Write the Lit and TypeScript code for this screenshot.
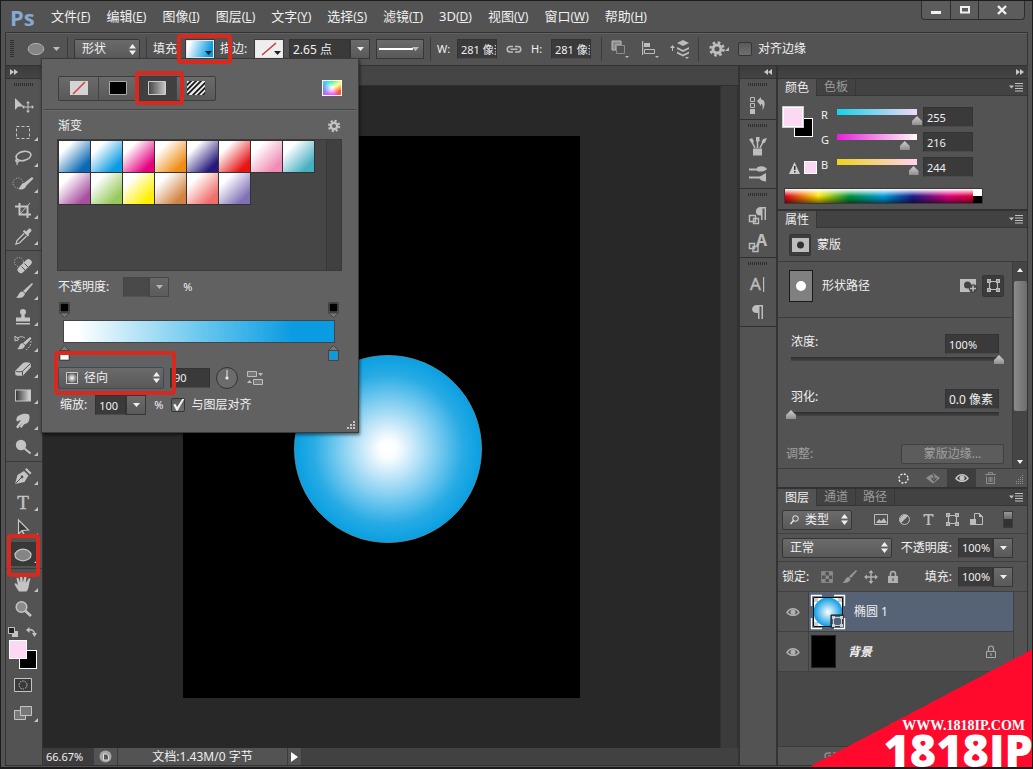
import { LitElement, html, svg, css, nothing, TemplateResult } from "lit";
import { customElement } from "lit/decorators.js";
import { classMap } from "lit/directives/class-map.js";
import { styleMap } from "lit/directives/style-map.js";

type Art = ReturnType<typeof svg>;

const icon = (w: number, h: number, art: Art, cls = "") =>
  html`<svg class=${cls} width=${w} height=${h} viewBox="0 0 ${w} ${h}" fill="currentColor" aria-hidden="true">${art}</svg>`;

const MENUS: [string, string][] = [
  ["文件", "F"], ["编辑", "E"], ["图像", "I"], ["图层", "L"], ["文字", "Y"], ["选择", "S"],
  ["滤镜", "T"], ["3D", "D"], ["视图", "V"], ["窗口", "W"], ["帮助", "H"],
];

const PRESETS = [
  "#0a68b4", "#0a9be2", "#e4007f", "#f08c14", "#27197c", "#e61414", "#f08cb4", "#46afc0",
  "#a850a0", "#96c85a", "#fff000", "#d28240", "#f06e6a", "#8070b4",
];

const SHIELD_DOTS = svg`<circle cx="6" cy="9" r="5" fill="none" stroke="currentColor" stroke-dasharray="1 1.6"/>`;

const TOOL_ART: Record<string, Art> = {
  move: svg`<path d="M3 2v12l3-3.2 5.500-.6z"/><path d="M16 6.500v9M11.500 11h9" stroke="currentColor" fill="none"/><path d="M16 5l-2 2.200h4zM16 17l-2-2.200h4zM10 11l2.200-2v4zM22 11l-2.200-2v4z"/>`,
  marquee: svg`<rect x="4.500" y="4.500" width="13" height="12" fill="none" stroke="currentColor" stroke-dasharray="3 2"/>`,
  lasso: svg`<ellipse cx="11.500" cy="8" rx="7.500" ry="4.500" transform="rotate(-12 11.500 8)" fill="none" stroke="currentColor" stroke-width="1.600"/><path d="M5 11c-2 1-1.500 3 .5 2.800s2-2-.5-2.800c-1 3 1 4-.2 6" fill="none" stroke="currentColor" stroke-width="1.300"/>`,
  quick: svg`${SHIELD_DOTS}<path d="M20 3l1.500 1.500-7 7-2.500-2.500zM12 9l2.500 2.500c-1 4-5.500 4.500-8.500 3.500 2.500-.5 2.500-5.500 6-6z"/>`,
  crop: svg`<path d="M7.500 3v11.500H19M3 6.500h12.500V18" fill="none" stroke="currentColor" stroke-width="2"/><path d="M8 14l10-11" stroke="currentColor"/>`,
  dropper: svg`<path d="M14 5.500l2.600-2.600c1.500-1.300 3.800 1 2.500 2.500L16.500 8l.8.900-1.500 1.500-5-5L12.300 4z"/><path d="M12 7.500l-7 7L4 18l3.500-1 7-7" fill="none" stroke="currentColor" stroke-width="1.300"/>`,
  heal: svg`<circle cx="7" cy="7" r="4.500" fill="none" stroke="currentColor" stroke-dasharray="1 1.600"/><rect x="4" y="8" width="17" height="6.500" rx="3" transform="rotate(-45 12.500 11)"/><path d="M9.500 11.500l3.500 3.500M12.500 8.500l3.500 3.500" stroke="#505050"/>`,
  brush: svg`<path d="M20 2l1 1-7.500 9-2.500-2zM10.500 10.500l2.500 2c-1 4.500-5.500 5-9 4 2.500-.5 2.500-6 6.500-6z"/>`,
  stamp: svg`<circle cx="11" cy="5" r="3"/><path d="M9.800 6h2.400l.8 5h-4z"/><rect x="4" y="10.500" width="14" height="4"/><rect x="4" y="16" width="14" height="1.500"/>`,
  history: svg`<path d="M18 4l1.500 1.500-6 6.500-2.500-2zM10.500 10l2.500 2.500c-1 4-5 4-8 3.500 2.500-.5 2-5.500 5.500-6z"/><path d="M5 5.500c3-2.500 6-2 8-.5M3 8V3l4 3.500z" fill="none" stroke="currentColor"/><path d="M19 8c0 4-2 7-5 9" fill="none" stroke="currentColor" stroke-dasharray="1.500 1.500"/>`,
  eraser: svg`<path d="M3 12l8-8c2-1 5-1 7.500 0L19 8l-8 8.500c-2 .5-5 .5-7.500-.5z"/><path d="M3.500 12c2 1 5 1 7 .3L18.500 4.500M10.500 12.500v4" fill="none" stroke="#505050"/>`,
  gradient: svg`<rect x="3.500" y="5" width="15" height="11" fill="url(#tool-ramp)" stroke="currentColor"/>`,
  smudge: svg`<path d="M4 16L9 9 5 10.500C3.500 8 5 5 8 4c3-1.500 7-1.500 9-.5 1 3 .5 6-1 8-1.500 1.500-3 1-4 2l-2.500 3.500-1.500-1.200 2.500-4L6 17.500z"/>`,
  dodge: svg`<circle cx="9" cy="8" r="5.200"/><path d="M12.500 11.500l6 5" stroke="currentColor" stroke-width="2"/>`,
  pen: svg`<path d="M3 18l2.500-9L12 5l4.500 4.500-4 6.500zM13 3.500l1.500-1.500 5 5L18 8.500z"/><path d="M3.500 17.500l6-6" stroke="#505050"/><circle cx="10" cy="11" r="1.400" fill="#505050"/>`,
  type: svg`<text x="11" y="17" text-anchor="middle" font-family="Liberation Serif, serif" font-size="19" stroke="currentColor" stroke-width=".4">T</text>`,
  path: svg`<path d="M6.500 2v14l3.500-3.500L16.500 12z" fill="#3a3a3a" stroke="currentColor" stroke-width="1.200"/><path d="M10 12.500l2.500 5" stroke="currentColor" stroke-width="1.500"/>`,
  ellipse: svg`<ellipse cx="11" cy="11" rx="8" ry="5.800" fill="#858585" stroke="#c4c4c4" stroke-width="1.200"/>`,
  hand: svg`<path d="M7 18.500C5 16 3.500 13 2.500 11c.5-1.200 2-.8 3.500 1.500L4.500 5.500c.5-1.300 1.800-1 2.200.2l1.500 4L8 3c.6-1.300 2-1 2.200 0l.6 6.500L12.500 3c.7-1 2-.6 2 .5l-.8 6.500 3-4.500c1-.8 2 0 1.500 1.200C16.500 11 17.500 15 14.500 18.500z"/>`,
  zoom: svg`<circle cx="9.500" cy="8" r="5.300" fill="#8b8b8b" stroke="currentColor" stroke-width="1.500"/><path d="M13.500 12l5.500 5" stroke="currentColor" stroke-width="2.600"/>`,
};

const TOOL_GROUPS: [string, string][][] = [
  [["move", "移动"], ["marquee", "选框"], ["lasso", "套索"], ["quick", "快速选择"], ["crop", "裁剪"], ["dropper", "吸管"]],
  [["heal", "修复"], ["brush", "画笔"], ["stamp", "图章"], ["history", "历史画笔"], ["eraser", "橡皮擦"], ["gradient", "渐变"], ["smudge", "涂抹"], ["dodge", "减淡"]],
  [["pen", "钢笔"], ["type", "文字"], ["path", "路径选择"], ["ellipse", "椭圆"]],
  [["hand", "抓手"], ["zoom", "缩放"]],
];

const DOCK_GROUPS: [string, Art][][] = [
  [["历史记录", svg`<path d="M2.500 2.500h4v4h-4zM2.500 8.500h4v4h-4z" fill="none" stroke="currentColor"/><path d="M2 14h5v5H2zM9 6l4-4v2.500c4 0 5 5 1.500 11 .5-4.500 0-6.500-1.500-6.500v2z"/>`]],
  [["画笔预设", svg`<path d="M5 12.500h9v7H5z"/><path d="M7 12L4 6M9.500 12V5M12 12l3-6" stroke="currentColor" stroke-width="1.600"/><path d="M1 3.500l3-1.500 2 3.500-2 2zM8 1h3.500v4.500H8zM13.500 6L15 3l4-1-2 4.500-2 1z"/>`],
   ["画笔", svg`<path d="M1 4.500h9v2H1zM9 3.500c4-2 7-1.500 10 1.500-3 3-7 3-10 2zM1 12.500h11v2H1zM11 13l7-4v8.500c-3 0-6-1.500-7-3.500z"/>`]],
  [["段落样式", svg`<path d="M12 10.500C6 10.500 7 2 12 2h6v13h-1.500V3.500h-2V15H13V10.500z"/><path d="M1.500 10.500h6v6h-6zM5.500 13.500h5v5h-5z" fill="none" stroke="currentColor" stroke-width="1.400"/>`],
   ["字符样式", svg`<text x="8" y="13" font-size="16" font-weight="700" font-family="Noto Sans, sans-serif">A</text><path d="M1.500 10.500h5v5h-5zM5 13.500h5v5H5z" fill="none" stroke="currentColor" stroke-width="1.400"/>`]],
  [["字符", svg`<text x="2" y="16" font-size="17" font-family="Noto Sans, sans-serif" stroke="currentColor" stroke-width=".4">A</text><path d="M15 3h1.200v15H15z"/>`],
   ["段落", svg`<path d="M9 11C2 11 3 3 9 3h6v14h-1.500V4.500h-2V17H10V11z"/>`]],
];

const caret = icon(7, 4, svg`<path d="M0 0h7L3.500 4z"/>`);
const updown = icon(7, 11, svg`<path d="M0 4.500h7L3.500 0zM0 6.500h7L3.500 11z"/>`);
const corner = icon(4, 4, svg`<path d="M4 0v4H0z"/>`, "corner");
const gear = icon(16, 16, svg`<circle cx="8" cy="8" r="4" fill="none" stroke="currentColor" stroke-width="3"/><circle cx="8" cy="8" r="6.500" fill="none" stroke="currentColor" stroke-width="2.500" stroke-dasharray="2.600 2.500"/>`);
const menuGlyph = icon(14, 9, svg`<path d="M0 2.500h5L2.500 5.500zM6 0h8v1H6zM6 2.500h8v1H6zM6 5h8v1H6zM6 7.500h8v1H6z"/>`);
const eye = icon(14, 10, svg`<path d="M1 5.500C4 .5 10 .5 13 5.500c-3 3.800-9 3.800-12 0z" fill="none" stroke="currentColor" stroke-width="1.500"/><circle cx="7" cy="5" r="2.600"/>`);
const noneMark = icon(18, 14, svg`<path d="M0 0h18v14H0z" fill="#d4d4d4"/><path d="M3 13L15 1" stroke="#d23c3c" stroke-width="1.500"/>`);
const pathBox = svg`<path d="M3.500 3.500h8v8h-8z" fill="none" stroke="currentColor" stroke-width="1.200"/><path d="M1 1h4v4H1zM10 1h4v4h-4zM1 10h4v4H1zM10 10h4v4h-4z"/><path d="M2.500 2.500h1v1h-1zM11.500 2.500h1v1h-1zM2.500 11.500h1v1h-1zM11.500 11.500h1v1h-1z" fill="#444"/>`;
const padlock = icon(12, 14, svg`<path d="M1 6h10v7H1z"/><path d="M3.500 6V4a2.500 2.500 0 015 0v2" fill="none" stroke="currentColor" stroke-width="1.600"/><path d="M5.500 8h1v3h-1z" fill="#444"/>`);

@customElement("app-root")
export class AppRoot extends LitElement {
  static styles = css`
    :host { display: block; height: 100vh; color: #f0f0f0; font: 12px/16px "Noto Sans", "Noto Sans CJK SC", sans-serif; --face: #535353; --line: #333; --well: #3a3a3a; }
    * { box-sizing: border-box; }
    svg { display: block; flex: none; overflow: visible; }
    button, input, select { font: inherit; color: inherit; margin: 0; padding: 0; border: 0; background: none; border-radius: 0; outline: 0; }
    button { display: flex; align-items: center; justify-content: center; position: relative; }
    input, select { min-width: 0; }
    label, .label { white-space: nowrap; }
    .window { position: relative; height: 100%; overflow: hidden; background: var(--face); display: flex; flex-direction: column; border: solid #1c1c1c; border-width: 1px 1px 2px; }

    .menubar { height: 31px; display: flex; align-items: center; padding-left: 9px; flex: none; }
    .brand { font: 700 22px/28px "Open Sans", sans-serif; color: #86a9d2; width: 33px; }
    .menus { display: flex; font-size: 13px; }
    .menus a { color: inherit; text-decoration: none; padding: 0 8px; white-space: nowrap; }
    .menus span { font-size: 12px; }
    .winbtns { margin: 0 7px 11px auto; display: flex; border: 1px solid #2d2d2d; border-top: 0; border-radius: 0 0 4px 4px; height: 19px; align-self: flex-start; background: #5c5c5c; }
    .winbtns button { width: 28px; }
    .winbtns button + button { border-left: 1px solid #2d2d2d; }
    .winbtns button:last-child { width: 46px; }

    .options { height: 34px; flex: none; display: flex; align-items: center; gap: 6px; padding-left: 4px; margin: 0 4px; border: 1px solid var(--line); box-shadow: inset 0 1px #626262; }
    .vgrip { width: 4px; height: 18px; background: repeating-linear-gradient(#303030 0 1px, transparent 1px 2px); }
    .sep { width: 1px; height: 24px; background: #3c3c3c; }
    .current { width: 41px; gap: 8px; padding-left: 5px; }
    .box { position: relative; display: inline-flex; align-items: center; }
    .box > svg:last-child { position: absolute; right: 4px; pointer-events: none; }
    .box > svg.lead { position: absolute; left: 8px; pointer-events: none; }
    select { appearance: none; height: 20px; width: 100%; padding-left: 7px; background: linear-gradient(#6b6b6b, #595959); border: 1px solid #363636; border-radius: 2px; }
    .led select { padding-left: 22px; }
    .field { height: 20px; background: var(--well); border: 1px solid #333; border-bottom-color: #4b4b4b; padding-left: 3px; }
    .num { font-size: 11px; }
    .drop { display: flex; flex: none; }
    .drop .field { flex: 1; width: 10px; }
    .drop button, .stroketype { width: 20px; height: 20px; background: linear-gradient(#6b6b6b, #595959); border: 1px solid #363636; }
    .sample { width: 28px; height: 18px; border: 1px solid #e8e8e8; outline: 1px solid #3a3a3a; background: linear-gradient(110deg, #fff 10%, #0a9be2 85%); }
    .sample.none { background: #eee; }
    .sample svg:last-child { position: absolute; right: 1px; bottom: 2px; color: #222; }
    .w27 { width: 27px; } .w29 { width: 29px; } .w14 { width: 14px; } .w22 { width: 22px; } .w24 { width: 24px; }
    .w40 { width: 40px; } .w48 { width: 48px; justify-content: flex-start; padding-left: 2px; } .w66 { width: 66px; } .w81 { width: 81px; }
    .gapped { margin-left: 4px; }
    .options > button, .muted { color: #bdbdbd; }
    .check { appearance: none; width: 14px; height: 14px; background: linear-gradient(#5a5a5a, #707070); border: 1px solid #353535; border-radius: 2px; flex: none; }
    .check:checked::before { content: ""; display: block; width: 12px; height: 12px; background: #f0f0f0; clip-path: polygon(8% 48%, 24% 40%, 40% 66%, 82% 0, 100% 0, 44% 98%, 34% 98%); }

    .workspace { flex: 1; min-height: 0; display: grid; grid-template-columns: 38px 1fr 40px 250px; margin: 0 4px 1px; border-bottom: 1px solid var(--line); }
    .collapse { height: 13px; background: linear-gradient(#3c3c3c, #444); border-bottom: 1px solid #333; color: #c8c8c8; display: flex; align-items: center; flex: none; }
    .collapse button { height: 12px; padding: 0 4px; }
    .collapse.end { justify-content: flex-end; }
    .hgrip { width: 20px; height: 3px; margin: 4px auto 7px; background: repeating-linear-gradient(90deg, #2e2e2e 0 1px, transparent 1px 2px); flex: none; }

    .tools { border: solid var(--line); border-width: 0 1px; display: flex; flex-direction: column; align-items: stretch; color: #c4c4c4; min-height: 0; }
    .tool { height: 26px; width: 100%; padding-right: 2px; }
    .tool .corner { position: absolute; right: 4px; bottom: 4px; }
    .tool.on::before { content: ""; position: absolute; inset: 1px 6px 1px 4px; background: #383838; }
    .tool svg { position: relative; }
    .tool-group + .tool-group { border-top: 1px solid #3a3a3a; margin-top: 1px; padding-top: 1px; }
    .quick { display: flex; justify-content: space-between; padding: 1px 5px 0 2px; height: 18px; align-items: center; }
    .chips { position: relative; width: 28px; height: 29px; margin-left: 3px; flex: none; }
    .chip { position: absolute; width: 18px; height: 19px; border: 1px solid #fff; background: #000; right: 0; bottom: 0; }
    .chip.front { left: 0; top: 0; right: auto; background: #fcd8f4; }
    .modes { display: flex; flex-direction: column; gap: 2px; margin-top: 3px; }

    .doc { display: grid; grid-template-rows: 20px 1fr 17px; grid-template-columns: 1fr 18px; min-width: 0; }
    .tabstrip { grid-column: 1 / 3; background: #454545; border-bottom: 1px solid #303030; }
    .stage { background: #282828; display: flex; align-items: center; justify-content: center; min-width: 0; overflow: hidden; }
    .vscroll { background: #3b3b3b; border: solid #313131; border-width: 0 1px; }
    .status { grid-column: 1 / 3; display: flex; background: #414141; padding-left: 1px; }
    .status > * { height: 17px; border-right: 1px solid #3c3c3c; background: var(--face); }
    .status .zoomval { width: 50px; background: #3c3c3c; padding-left: 2px; }
    .status .sync { width: 24px; }
    .status output { width: 170px; text-align: center; line-height: 17px; white-space: nowrap; }
    .status .more { width: 14px; }

    .dock { border: solid #333; border-width: 0 2px; color: #bdbdbd; }
    .dock section { border-bottom: 1px solid #303030; display: flex; flex-direction: column; }
    .dock section button { height: 28px; width: 100%; }
    .dock .hgrip { margin-bottom: 5px; }

    .panels { display: flex; flex-direction: column; min-width: 0; min-height: 0; }
    .panel { border-right: 1px solid var(--line); display: flex; flex-direction: column; }
    .panel + .panel { border-top: 2px solid #323232; }
    .tabs { height: 17px; background: #424242; display: flex; flex: none; border-bottom: 1px solid #363636; align-items: stretch; }
    .tabs button { padding: 0 7px; color: #9a9a9a; border-right: 1px solid #363636; line-height: 16px; white-space: nowrap; }
    .tabs .on { background: var(--face); color: #eee; height: 17px; }
    .tabs .opt { margin-left: auto; border: 0; padding: 0 4px; color: #c0c0c0; }
    .color { display: grid; grid-template-columns: 38px 1fr; padding: 11px 58px 0 5px; height: 90px; }
    .color .chips { width: 30px; height: 30px; margin: 0; }
    .color .chip { width: 19px; height: 19px; }
    .color .chip.front { width: 20px; height: 20px; outline: 1px solid #ccc; }
    .warn { display: flex; gap: 4px; margin: 24px 0 0 6px; align-items: center; color: #cfcfcf; }
    .warn i { width: 13px; height: 13px; border: 1px solid #fff; background: #fcd8f4; }
    .rows { display: flex; flex-direction: column; gap: 5px; }
    .channel { display: grid; grid-template-columns: 10px 90px 50px; gap: 0 1px; height: 20px; }
    .channel label { font-size: 11px; line-height: 16px; }
    .range { appearance: none; height: 18px; width: 100%; display: block; }
    .range::-webkit-slider-runnable-track { height: 18px; background: var(--ramp) no-repeat center 2px / calc(100% - 10px) 6px; }
    .range::-webkit-slider-thumb { appearance: none; width: 10px; height: 9px; margin-top: 9px; background: linear-gradient(#d0d0d0, #8e8e8e); clip-path: polygon(50% 0, 100% 55%, 100% 100%, 0 100%, 0 55%); }
    .range.plain { --ramp: linear-gradient(#2e2e2e, #444); width: calc(100% + 10px); margin-left: -5px; height: 12px; }
    .range.plain::-webkit-slider-runnable-track { height: 12px; background-position: center 3px; background-size: calc(100% - 10px) 4px; }
    .range.plain::-webkit-slider-thumb { margin-top: 1px; }
    .spectrum { height: 16px; margin: 2px 44px 5px 6px; width: 199px; border: 1px solid #3a3a3a; display: flex; background: linear-gradient(#fff, rgba(255,255,255,0) 50%, rgba(0,0,0,.55)), linear-gradient(90deg, #e2001a, #ffe800 17%, #009640 33%, #009fe3 50%, #1d1d8c 65%, #e4007f 83%, #e2001a); }
    .spectrum i { margin-left: auto; width: 9px; background: linear-gradient(#fff 50%, #000 50%); }

    .masks { height: 34px; display: flex; align-items: center; gap: 6px; padding-left: 11px; border-bottom: 1px solid #3c3c3c; }
    .pressed { width: 22px; height: 22px; background: #3c3c3c; border: 1px solid #353535; border-radius: 2px; color: #bdbdbd; }
    .scroller { display: grid; grid-template-columns: minmax(0, 1fr) 15px; height: 206px; }
    .shape { display: flex; align-items: center; height: 56px; padding: 0 8px 8px 11px; border-bottom: 1px solid #3c3c3c; gap: 9px; }
    .preview { width: 24px; height: 32px; background: #808080; border: 1px solid #1a1a1a; display: grid; place-items: center; }
    .preview i { width: 10px; height: 10px; border-radius: 50%; background: #fff; }
    .shape .add { margin-left: auto; }
    .shape .pressed { margin-left: -4px; }
    .slide { height: 55px; padding: 16px 13px 0 13px; }
    .slide div { display: flex; justify-content: space-between; }
    .slide .field { width: 54px; height: 20px; }
    .adjust { display: flex; justify-content: space-between; padding: 16px 8px 0; color: #a0a0a0; align-items: center; }
    .adjust button { width: 103px; height: 20px; border: 1px solid #404040; background: #5c5c5c; border-radius: 2px; }
    .bar { background: #454545; display: flex; flex-direction: column; align-items: center; justify-content: space-between; padding: 6px 0 4px; border-left: 1px solid #3c3c3c; }
    .bar i { flex: 1; width: 13px; margin: 9px 0 49px; border-radius: 2px; background: linear-gradient(90deg, #8b8b8b, #6d6d6d); }
    .foot { height: 19px; border-top: 1px solid #3c3c3c; display: flex; justify-content: flex-end; align-items: stretch; color: #8e8e8e; flex: none; }
    .foot button { width: 29px; }
    .foot .on { background: #3e3e3e; color: #c4c4c4; }
    .foot .size { width: 22px; }
    .foot .size svg { margin: 6px 0 0 10px; }

    .layers { flex: 1; min-height: 0; }
    .row { height: 28px; display: flex; align-items: center; padding: 0 14px 0 4px; border-bottom: 1px solid #404040; flex: none; }
    .row.last { height: 30px; }
    .row .drop { width: 55px; margin-left: 6px; }
    .row .push { margin-left: auto; }
    .kinds { display: flex; margin-left: 16px; color: #bdbdbd; flex: 1; }
    .kinds button { width: 24px; height: 20px; }
    .toggle { width: 10px; height: 17px; background: linear-gradient(#999, #666 50%, #333 50%); border: 1px solid #3a3a3a; margin-left: auto; }
    .locks { display: flex; margin-left: 7px; color: #b0b0b0; }
    .locks button { width: 22px; }
    .w70 { width: 70px; } .w110 { width: 110px; } .w106 { width: 106px; }
    .list { background: #484848; flex: 1; min-height: 0; margin-right: 13px; list-style: none; margin-block: 0; padding: 0; border-right: 1px solid #404040; }
    .list li { height: 40px; display: flex; align-items: stretch; background: var(--face); border-bottom: 1px solid #404040; }
    .list .vis { width: 31px; border-right: 1px solid #404040; color: #b0b0b0; flex: none; }
    .list .body { flex: 1; display: flex; align-items: center; padding: 0 16px 0 2px; gap: 9px; }
    .list .on .body { background: #566376; }
    .list .thumb { width: 25px; height: 33px; background: #000; margin-right: 3px; border: 1px solid #222; }
    .list .body > svg:last-child { margin-left: auto; color: #aaa; }
    .bgname { font-style: italic; font-weight: 700; }
    .links { justify-content: flex-start; padding-left: 46px; align-items: center; }

    .popup { position: absolute; left: 40px; top: 57px; width: 318px; background: #616161; border: 1px solid #3a3a3a; padding: 0 16px 13px; box-shadow: 1px 2px 3px #0008; }
    .popup .r { display: flex; align-items: center; }
    .fills { height: 51px; padding-top: 8px; justify-content: space-between; margin: 0 -14px; padding-inline: 14px; border-bottom: 1px solid #444; box-shadow: 0 1px #6c6c6c; }
    .kindset { display: flex; border: 1px solid #3c3c3c; border-radius: 2px; background: linear-gradient(#6b6b6b, #595959); }
    .kindset button { width: 39px; height: 23px; }
    .kindset button + button { border-left: 1px solid #444; }
    .kindset .on { background: #404040; }
    .picker { width: 20px; height: 16px; border: 1px solid #fff; background: radial-gradient(#fff, transparent 70%), conic-gradient(from 60deg, #ff8, #f50, #f4f, #c6f, #68f, #3df, #4f6, #ff8); }
    .head { height: 29px; padding-top: 3px; justify-content: space-between; }
    .head button { color: #c4c4c4; gap: 1px; }
    .head svg { scale: .8; }
    .presets { height: 132px; margin-left: -1px; border: 1px solid #3a3a3a; background: #464646; display: grid; grid-template-columns: 1fr 15px; }
    .cells { display: grid; grid-template-columns: repeat(8, 31px); grid-auto-rows: 31px; gap: 1px; padding: 1px; align-content: start; justify-content: start; }
    .cells button { outline: 1px solid #333; background: linear-gradient(135deg, #fff 22%, var(--hue) 82%); }
    .presets > i { background: #404040; border-left: 1px solid #373737; }
    .fade { height: 31px; gap: 14px; }
    .fade .drop { width: 46px; opacity: .6; }
    .stops { display: flex; justify-content: space-between; height: 18px; margin: 0 3px 0 1px; }
    .stops.low { height: 21px; padding-top: 2px; }
    .stops button { width: 11px; height: 16px; }
    .ramp { height: 23px; border: 1px solid #444; margin: 0 7px 0 5px; background: linear-gradient(90deg, #fff 5%, #6cc8ee 50%, #0a9be2 85%); }
    .kindrow { height: 27px; gap: 6px; }
    .kindrow select { padding-left: 25px; height: 22px; border-color: #3c4a60; }
    .scale { height: 28px; padding-left: 2px; gap: 8px; }
    .scale .drop { width: 51px; }
    .scale label:last-child { margin-left: -2px; }
    .popup > .size { position: absolute; right: 2px; bottom: 2px; color: #c4c4c4; }

    .mark { position: absolute; border: 4px solid #d9291f; border-radius: 4px; pointer-events: none; }
    .m1 { left: 176px; top: 33px; width: 55px; height: 30px; }
    .m2 { left: 134px; top: 70px; width: 49px; height: 34px; }
    .m3 { left: 53px; top: 350px; width: 122px; height: 44px; }
    .m4 { left: 6px; top: 533px; width: 33px; height: 43px; }
    .stampmark { position: absolute; right: -1px; bottom: -2px; width: 228px; height: 120px; background: linear-gradient(to bottom right, transparent 50%, #ff0a2d 50%); color: #fff; text-align: right; white-space: nowrap; }
    .stampmark p { margin: 0; }
    .stampmark .site { font: 700 14px/16px "Liberation Serif", serif; padding: 69px 8px 0 0; }
    .stampmark .name { font: 800 45px/32px "Open Sans", sans-serif; }
  `;

  private pick(id: string, name: string, options: string[], width: string, lead: TemplateResult | typeof nothing = nothing) {
    return html`<span class="box ${width}"><select id=${id} aria-label=${name}>${options.map((o) => html`<option>${o}</option>`)}</select>${lead}${updown}</span>`;
  }

  private drop(id: string, name: string, value: string, cls = "") {
    return html`<span class="drop ${cls}"><input class=${classMap({ field: true, num: !value.includes("点") })} id=${id} aria-label=${name} .value=${value}><button aria-label="${name}选项">${caret}</button></span>`;
  }

  private menubar() {
    return html`<header class="menubar">
      <span class="brand">Ps</span>
      <nav class="menus">${MENUS.map(([t, k]) => html`<a href="#">${t}<span>(<u>${k}</u>)</span></a>`)}</nav>
      <div class="winbtns">
        <button aria-label="最小化">${icon(12, 10, svg`<path d="M1 6h10v3H1z"/>`)}</button>
        <button aria-label="最大化">${icon(12, 10, svg`<path d="M2 2h8v5.500H2z" fill="none" stroke="currentColor" stroke-width="2"/>`)}</button>
        <button aria-label="关闭">${icon(12, 10, svg`<path d="M2 1l8 8M10 1L2 9" stroke="currentColor" stroke-width="2.400"/>`)}</button>
      </div>
    </header>`;
  }

  private options() {
    return html`<div class="options">
      <i class="vgrip"></i>
      <button class="current" aria-label="椭圆工具">${icon(18, 14, svg`<ellipse cx="9" cy="7" rx="7.800" ry="5.600" fill="#858585" stroke="#b0b0b0"/>`)}${caret}</button>
      <i class="sep"></i>
      ${this.pick("mode", "工具模式", ["形状", "路径", "像素"], "w66")}
      <i class="sep"></i>
      <span class="label w27">填充:</span>
      <button class="sample" aria-label="填充">${caret}</button>
      <span class="label w29">描边:</span>
      <button class="sample none" aria-label="描边">${icon(20, 14, svg`<path d="M3 13L17 1" stroke="#c83c3c" stroke-width="1.600"/>`)}${caret}</button>
      ${this.drop("stroke", "描边宽度", "2.65 点", "w81")}
      <button class="box w48 stroketype" aria-label="描边类型">${icon(34, 2, svg`<path d="M0 0h34v2H0z" fill="#fff"/>`)}${caret}</button>
      <i class="sep"></i>
      <label class="w14 num" for="w">W:</label><input id="w" class="field num w40" .value=${"281 像素"}>
      <button class="w22" aria-label="链接">${icon(16, 10, svg`<path d="M7 2.500H4a2.700 2.700 0 000 5.500h3M9 2.500h3a2.700 2.700 0 010 5.500H9M4.500 5.200h7" fill="none" stroke="currentColor" stroke-width="1.600"/>`)}</button>
      <label class="w14 num" for="h">H:</label><input id="h" class="field num w40" .value=${"281 像素"}>
      <i class="sep gapped"></i>
      <button class="w24" aria-label="路径操作">${icon(20, 20, svg`<path d="M2 2h9v4H6v5H2z" fill="#8c8c8c" stroke="currentColor"/><path d="M6.500 6.500h8v8h-8z" fill="none" stroke="#8c8c8c"/><path d="M15 17h4l-2 2z"/>`)}</button>
      <button class="w24" aria-label="路径对齐">${icon(20, 20, svg`<path d="M2 2h1.200v14H2zM4 4h6v4H4z"/><path d="M4.500 10.500h10v4h-10z" fill="none" stroke="currentColor"/><path d="M15 17h4l-2 2z"/>`)}</button>
      <button class="w24" aria-label="路径排列">${icon(20, 20, svg`<path d="M13 1l6 3-6 3-6-3zM7 8l6 3 6-3v2l-6 3-6-3zM7 12.500l6 3 6-3v2l-6 3-6-3z"/><path d="M0 9l2.500-3L5 9zM2 9h1v3H2z"/><path d="M15 18h4l-2 2z"/>`)}</button>
      <i class="sep"></i>
      <button class="w27" aria-label="设置">${gear}${corner}</button>
      <input type="checkbox" class="check" id="edges"><label for="edges">对齐边缘</label>
    </div>`;
  }

  private tools() {
    return html`<aside class="tools">
      <div class="collapse"><button aria-label="展开">${icon(8, 6, svg`<path d="M0 0l4 3-4 3zM4 0l4 3-4 3z"/>`)}</button></div>
      <i class="hgrip"></i>
      ${TOOL_GROUPS.map((g) => html`<div class="tool-group">${g.map(([id, name]) => html`
        <button class=${classMap({ tool: true, on: id === "ellipse" })} aria-label=${name}>${icon(22, 20, TOOL_ART[id])}${id === "move" || id === "zoom" ? nothing : corner}</button>`)}</div>`)}
      <div class="quick">
        ${icon(10, 10, svg`<path d="M4 4h6v6H4z"/><path d="M.5.500h6v6h-6z" fill="#222" stroke="currentColor"/>`)}
        ${icon(11, 10, svg`<path d="M3 3c3-1 5.500 1 5.500 4" fill="none" stroke="currentColor" stroke-width="1.500"/><path d="M0 3l3.500-3v6zM6 6h5l-2.500 4z"/>`)}
      </div>
      <div class="chips"><i class="chip"></i><i class="chip front"></i></div>
      <div class="modes">
        <button class="tool" aria-label="快速蒙版">${icon(18, 14, svg`<path d="M.5.500h17v13H.5z" fill="#3a3a3a" stroke="currentColor"/><circle cx="9" cy="7" r="4" fill="none" stroke="currentColor" stroke-dasharray="1.500 1"/>`)}</button>
        <button class="tool" aria-label="屏幕模式">${icon(18, 14, svg`<path d="M.5 4.500h11v9H.5z" fill="#777" stroke="currentColor"/><path d="M6.500.500h11v9h-11z" fill="#777" stroke="currentColor"/>`)}${corner}</button>
      </div>
    </aside>`;
  }

  private document() {
    return html`<main class="doc">
      <div class="tabstrip"></div>
      <div class="stage">
        ${icon(397, 562, svg`<defs><radialGradient id="ball"><stop offset="0" stop-color="#fff"/><stop offset=".1" stop-color="#fafdff"/><stop offset=".3" stop-color="#c0e6f8"/><stop offset=".55" stop-color="#74c9ef"/><stop offset=".8" stop-color="#27abe4"/><stop offset="1" stop-color="#0a9fe2"/></radialGradient></defs>
          <path d="M0 0h397v562H0z" fill="#000"/><circle cx="205" cy="313" r="93.500" fill="url(#ball)" stroke="#5d9aa8" stroke-width=".8"/>`)}
      </div>
      <div class="vscroll"></div>
      <footer class="status">
        <input class="zoomval num" aria-label="缩放比例" .value=${"66.67%"}>
        <button class="sync" aria-label="同步">${icon(13, 13, svg`<circle cx="6.500" cy="6.500" r="6" fill="#a5a5a5"/><path d="M4.500 4h3l2 2v4h-5z" fill="#555" stroke="#ddd"/>`)}</button>
        <output>文档:1.43M/0 字节</output>
        <button class="more" aria-label="更多">${icon(7, 10, svg`<path d="M0 0l7 5-7 5z" fill="#fff"/>`)}</button>
      </footer>
    </main>`;
  }

  private dock() {
    return html`<aside class="dock">
      <div class="collapse end"><button aria-label="展开面板">${icon(8, 6, svg`<path d="M4 0L0 3l4 3zM8 0L4 3l4 3z"/>`)}</button></div>
      ${DOCK_GROUPS.map((g) => html`<section><i class="hgrip"></i>${g.map(([n, art]) => html`<button aria-label=${n}>${icon(20, 20, art)}</button>`)}</section>`)}
    </aside>`;
  }

  private tabs(names: string[]) {
    return html`<div class="tabs">${names.map((n, i) => html`<button class=${classMap({ on: i === 0 })}>${n}</button>`)}<button class="opt" aria-label="面板菜单">${menuGlyph}</button></div>`;
  }

  private channel(name: string, value: number, from: string, to: string) {
    return html`<div class="channel">
      <label for="ch-${name}">${name}</label>
      <input type="range" class="range" id="ch-${name}" min="0" max="255" .value=${String(value)} style=${styleMap({ "--ramp": `linear-gradient(90deg, ${from}, ${to})` })}>
      <input class="field num" aria-label="${name} 数值" .value=${String(value)}>
    </div>`;
  }

  private colorPanel() {
    return html`<section class="panel">
      ${this.tabs(["颜色", "色板"])}
      <div class="color">
        <div><div class="chips"><i class="chip"></i><i class="chip front"></i></div>
          <div class="warn">${icon(11, 12, svg`<path d="M5.500 0L11 12H0z"/><path d="M5 4h1.500v4H5zM5 9h1.500v1.500H5z" fill="#333"/>`)}<i></i></div></div>
        <div class="rows">
          ${this.channel("R", 255, "#14d2ee", "#f4d8f4")}
          ${this.channel("G", 216, "#e81edc", "#fffaf4")}
          ${this.channel("B", 244, "#f0d21e", "#ffd2ee")}
        </div>
      </div>
      <div class="spectrum"><i></i></div>
    </section>`;
  }

  private slide(id: string, name: string, text: string, pos: number) {
    return html`<div class="slide"><div><label for=${id}>${name}:</label><input class=${classMap({ field: true, num: text.endsWith("%") })} aria-label="${name}数值" .value=${text}></div>
      <input type="range" class="range plain" id=${id} .value=${String(pos)}></div>`;
  }

  private propertiesPanel() {
    return html`<section class="panel">
      ${this.tabs(["属性"])}
      <div class="masks"><button class="pressed" aria-label="蒙版">${icon(17, 14, svg`<path d="M0 0h17v14H0z"/><circle cx="8.500" cy="7" r="3.500" fill="#333"/>`)}</button><span>蒙版</span></div>
      <div class="scroller">
        <div>
          <div class="shape"><span class="preview"><i></i></span><span>形状路径</span>
            <button class="add muted" aria-label="添加蒙版">${icon(17, 14, svg`<path d="M0 0h16v13H0z"/><circle cx="7.500" cy="6" r="3.500" fill="#444"/><circle cx="13" cy="9.500" r="4.200" fill="#444"/><path d="M12.300 6.500h1.500v2.300H16v1.500h-2.200v2.300h-1.500v-2.300H10V8.800h2.300z"/>`)}</button>
            <button class="pressed" aria-label="矢量蒙版">${icon(15, 15, pathBox)}</button></div>
          ${this.slide("density", "浓度", "100%", 100)}
          ${this.slide("feather", "羽化", "0.0 像素", 0)}
          <div class="adjust"><span>调整:</span><button disabled>蒙版边缘...</button></div>
        </div>
        <div class="bar">${icon(6, 4, svg`<path d="M0 4h6L3 0z"/>`)}<i></i>${icon(6, 4, svg`<path d="M0 0h6L3 4z"/>`)}</div>
      </div>
      <div class="foot">
        <button aria-label="载入选区">${icon(11, 11, svg`<circle cx="5.500" cy="5.500" r="4.500" fill="none" stroke="#eee" stroke-width="1.400" stroke-dasharray="2 1.500"/>`)}</button>
        <button aria-label="应用蒙版">${icon(14, 12, svg`<path d="M7 1l7 5-7 5.500L0 6z"/><path d="M4 2c4-1 4 2 4 5M5.500 6L8 9l2.500-3" fill="none" stroke="#505050" stroke-width="1.300"/>`)}</button>
        <button class="on" aria-label="停用蒙版">${eye}</button>
        <button aria-label="删除">${icon(11, 12, svg`<path d="M0 2.500h11M3.500 2V.7h4V2M1.500 4.500v7h8v-7M4 5v5M5.500 5v5M7 5v5" fill="none" stroke="currentColor"/>`)}</button>
        <span class="size">${icon(9, 9, svg`<path d="M7 0h1v1H7zM5 2h1v1H5zM7 2h1v1H7zM3 4h1v1H3zM5 4h1v1H5zM7 4h1v1H7zM1 6h1v1H1zM3 6h1v1H3zM5 6h1v1H5zM7 6h1v1H7zM1 8h1v1H1zM3 8h1v1H3zM5 8h1v1H5zM7 8h1v1H7z"/>`)}</span>
      </div>
    </section>`;
  }

  private layersPanel() {
    const kinds: [string, Art][] = [
      ["像素", svg`<path d="M1.500 2.500h13v10h-13z" fill="none" stroke="currentColor"/><path d="M3 11l3-4 2 2 3-3 3 5z"/>`],
      ["调整", svg`<circle cx="7.500" cy="7.500" r="5" fill="none" stroke="currentColor"/><path d="M4 11a5 5 0 017-7z"/>`],
      ["文字", svg`<path d="M2.500 2h10v3h-1l-.5-1.500H8.500v8.500l1.500.5v.5H5v-.5l1.500-.5V3.500H4L3.500 5h-1z"/>`],
      ["形状", pathBox],
      ["智能对象", svg`<path d="M5.500 1.500h5l3 3v8h-8z" fill="none" stroke="currentColor"/><path d="M10 1v4h4zM1 7h6v6H1z"/>`],
    ];
    const locks: [string, Art][] = [
      ["透明像素", svg`<path d="M1.500 1.500h11v11h-11z" fill="none" stroke="#808080"/><path d="M2 2h3.500v3.500H2zM9 2h3.500v3.500H9zM5.500 5.500H9V9H5.500zM2 9h3.500v3.500H2zM9 9h3.500v3.500H9z" fill="#8a8a8a"/>`],
      ["图像像素", svg`<path d="M14 0l1 1-6 7-2-1.500zM6.500 7l2 2c-1 3.500-4 4-8 4C3 12 3 7.500 6.500 7z" fill="#989898"/>`],
      ["位置", svg`<path d="M7 2v10M2 7h10" stroke="currentColor" stroke-width="1.400"/><path d="M7 0L4.500 3h5zM7 14l-2.500-3h5zM0 7l3-2.500v5zM14 7l-3-2.500v5z"/>`],
    ];
    return html`<section class="panel layers">
      ${this.tabs(["图层", "通道", "路径"])}
      <div class="row">
        ${this.pick("kind", "筛选类型", ["类型", "名称"], "w70 led", icon(9, 10, svg`<circle cx="5.500" cy="3.500" r="2.800" fill="none" stroke="currentColor"/><path d="M3.500 5.500L.5 9" stroke="currentColor" stroke-width="1.300"/>`, "lead"))}
        <div class="kinds">${kinds.map(([n, art]) => html`<button aria-label=${n}>${icon(15, 15, art)}</button>`)}</div>
        <button class="toggle" aria-label="筛选开关"></button>
      </div>
      <div class="row">${this.pick("blend", "混合模式", ["正常", "正片叠底"], "w110")}<label class="push" for="opacity">不透明度:</label>${this.drop("opacity", "不透明度", "100%")}</div>
      <div class="row last"><span>锁定:</span>
        <div class="locks">${locks.map(([n, art]) => html`<button aria-label=${n}>${icon(15, 14, art)}</button>`)}<button aria-label="全部">${padlock}</button></div>
        <label class="push" for="fill">填充:</label>${this.drop("fill", "填充", "100%")}</div>
      <ul class="list">
        <li class="on"><button class="vis" aria-label="可见">${eye}</button><div class="body">
          ${icon(34, 34, svg`<path d="M2 2h30v30H2z" fill="#fff"/><path d="M2 2h5v5H2zM27 2h5v5h-5zM2 27h5v5H2zM12 2h5v5h-5z" fill="#ccc"/><circle cx="17" cy="17" r="14.500" fill="url(#ball-s)"/><path d="M2.500 2.500h29v29h-29z" fill="none" stroke="#111"/><path d="M20 20h12v12H20z" fill="#566376" stroke="#111"/><path d="M22.500 22.500h8v8h-8z" fill="none" stroke="#c8d0da"/><path d="M21 21h3v3h-3zM29 21h3v3h-3zM21 29h3v3h-3zM29 29h3v3h-3z" fill="#c8d0da"/><path d="M.5 11V.5H11M23 .5h10.500V11M33.500 23v10.500H23M11 33.500H.5V23" fill="none" stroke="#fff" stroke-width="1.400"/>
          <defs><radialGradient id="ball-s"><stop offset="0" stop-color="#fff"/><stop offset="1" stop-color="#0a9be2"/></radialGradient></defs>`)}
          <span>椭圆 1</span></div></li>
        <li><button class="vis" aria-label="可见">${eye}</button><div class="body"><i class="thumb"></i><span class="bgname">背景</span>
          ${icon(12, 14, svg`<path d="M1.500 6.500h9v6h-9z" fill="none" stroke="currentColor"/><path d="M3.500 6V3.500a2.500 2.500 0 015 0V6" fill="none" stroke="currentColor" stroke-width="1.200"/><path d="M5.500 8h1v3h-1z"/>`)}</div></li>
      </ul>
      <div class="foot links">${icon(16, 12, svg`<path d="M7 3H4a2.500 2.500 0 000 6h3M9 3h3a2.500 2.500 0 010 6H9M4 6h8" fill="none" stroke="currentColor" stroke-width="1.400"/>`)}</div>
    </section>`;
  }

  private popup() {
    const stop = (fill: string, down: boolean) => icon(11, 16, down
      ? svg`<path d="M.5.500h10v10h-10z" fill="#777" stroke="#444"/><path d="M1.500 1.500h8v8h-8z" fill=${fill}/><path d="M.5 11h10L5.500 15.500z" fill="#777" stroke="#444"/>`
      : svg`<path d="M.5 5.500h10v10h-10z" fill="#777" stroke="#444"/><path d="M1.500 6.500h8v8h-8z" fill=${fill}/><path d="M.5 5.500h10L5.500.500z" fill="#777" stroke="#444"/>`);
    const ramps = svg`<defs><linearGradient id="grey"><stop offset="0" stop-color="#444"/><stop offset="1" stop-color="#c8c8c8"/></linearGradient></defs>`;
    return html`<section class="popup">
      <div class="r fills">
        <div class="kindset">
          <button aria-label="无颜色">${noneMark}</button>
          <button aria-label="纯色">${icon(18, 14, svg`<path d="M.5.500h17v13H.5z" fill="#000" stroke="#aaa"/>`)}</button>
          <button class="on" aria-label="渐变">${icon(18, 14, svg`${ramps}<path d="M.5.500h17v13H.5z" fill="url(#grey)" stroke="#ccc"/>`)}</button>
          <button aria-label="图案">${icon(18, 14, svg`<defs><clipPath id="hatch"><path d="M0 0h18v14H0z"/></clipPath></defs><path d="M0 0h18v14H0z" fill="#e8e8e8"/><path d="M-1 5l6-6M-1 10L10-1M0 14L15-1M5 15L19 1M10 15l9-9M15 15l4-4" stroke="#111" stroke-width="1.700" clip-path="url(#hatch)"/>`)}</button>
        </div>
        <button class="picker" aria-label="拾色器"></button>
      </div>
      <div class="r head"><span>渐变</span><button aria-label="渐变设置">${gear}</button></div>
      <div class="presets"><div class="cells">${PRESETS.map((c) => html`<button aria-label="渐变 ${c}" style=${styleMap({ "--hue": c })}></button>`)}</div><i></i></div>
      <div class="r fade"><label for="stop">不透明度:</label>${this.drop("stop", "色标不透明度", "")}<span class="num">%</span></div>
      <div class="stops"><button aria-label="不透明度色标">${stop("#000", true)}</button><button aria-label="不透明度色标">${stop("#000", true)}</button></div>
      <div class="ramp"></div>
      <div class="stops low"><button aria-label="白色色标">${stop("#fff", false)}</button><button aria-label="蓝色色标">${stop("#0a9be2", false)}</button></div>
      <div class="r kindrow">
        ${this.pick("style", "渐变样式", ["径向", "线性", "角度"], "w106", icon(12, 12, svg`<defs><radialGradient id="dot"><stop offset="0" stop-color="#fff"/><stop offset="1" stop-color="#555"/></radialGradient></defs><path d="M.5.500h11v11H.5z" fill="url(#dot)" stroke="#ccc"/>`, "lead"))}
        <input class="field num w40" aria-label="角度" .value=${"90"}>
        ${icon(22, 22, svg`<circle cx="11" cy="11" r="10.500" fill="#6c6c6c" stroke="#333"/><path d="M11 3v8" stroke="#ccc" stroke-width="1.300"/><circle cx="11" cy="11" r="1.600" fill="#eee"/>`)}
        <button class="w22 muted" aria-label="反向">${icon(16, 14, svg`<path d="M.5.500h9v5h-9zM6.500 8.500h9v5h-9z" fill="#777" stroke="currentColor"/><path d="M11 2h5l-2.500 3zM0 12h5L2.500 9z"/>`)}</button>
      </div>
      <div class="r scale"><label for="scale">缩放:</label>${this.drop("scale", "缩放", "100")}<span class="num">%</span>
        <input type="checkbox" class="check" id="align" checked><label for="align">与图层对齐</label></div>
      ${icon(9, 9, svg`<path d="M6 0h2v2H6zM3 3h2v2H3zM6 3h2v2H6zM0 6h2v2H0zM3 6h2v2H3zM6 6h2v2H6z"/>`, "size")}
    </section>`;
  }

  render() {
    return html`<div class="window">
      <svg width="0" height="0" style="position:absolute"><defs><linearGradient id="tool-ramp"><stop offset="0" stop-color="#333"/><stop offset="1" stop-color="#ddd"/></linearGradient></defs></svg>
      ${this.menubar()} ${this.options()}
      <div class="workspace">
        ${this.tools()} ${this.document()} ${this.dock()}
        <div class="panels"><div class="collapse end"><button aria-label="折叠面板">${icon(8, 6, svg`<path d="M0 0l4 3-4 3zM4 0l4 3-4 3z"/>`)}</button></div>
          ${this.colorPanel()} ${this.propertiesPanel()} ${this.layersPanel()}</div>
      </div>
      ${this.popup()}
      <i class="mark m1"></i><i class="mark m2"></i><i class="mark m3"></i><i class="mark m4"></i>
      <div class="stampmark"><p class="site">WWW.1818IP.COM</p><p class="name">1818IP</p></div>
    </div>`;
  }
}
